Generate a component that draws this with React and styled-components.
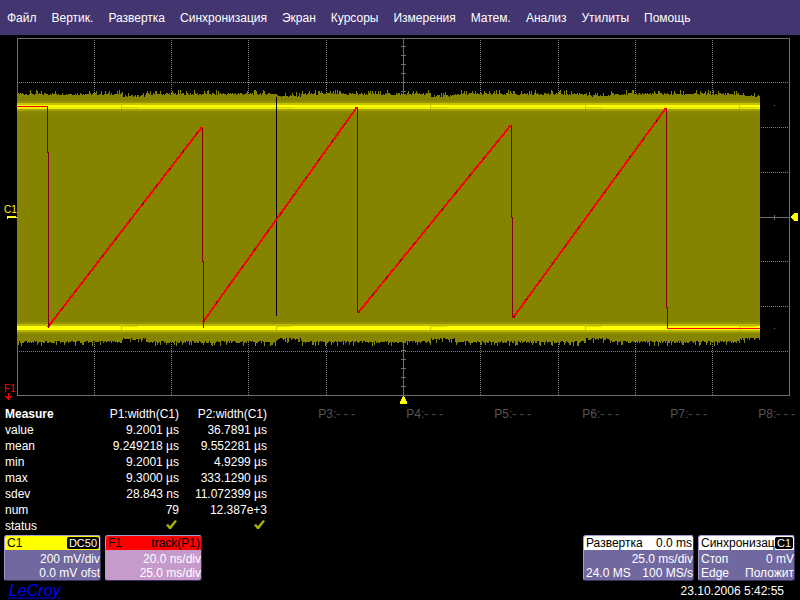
import React from "react";
import styled, { createGlobalStyle } from "styled-components";

const menuItems = [
  "Файл",
  "Вертик.",
  "Развертка",
  "Синхронизация",
  "Экран",
  "Курсоры",
  "Измерения",
  "Матем.",
  "Анализ",
  "Утилиты",
  "Помощь",
];

const params = [
  "P1:width(C1)",
  "P2:width(C1)",
  "P3:- - -",
  "P4:- - -",
  "P5:- - -",
  "P6:- - -",
  "P7:- - -",
  "P8:- - -",
];

const stats = [
  ["value", "9.2001 µs", "36.7891 µs"],
  ["mean", "9.249218 µs", "9.552281 µs"],
  ["min", "9.2001 µs", "4.9299 µs"],
  ["max", "9.3000 µs", "333.1290 µs"],
  ["sdev", "28.843 ns", "11.072399 µs"],
  ["num", "79", "12.387e+3"],
];

const gridColumns = [94, 171, 248, 326, 480, 558, 635, 712];
const gridRows = [82, 127, 172, 261, 306, 351];
const sweeps = [17, 122, 277, 431, 586, 740, 760];

const noise = (n) => {
  const v = Math.sin(n * 12.9898) * 43758.5453;
  return v - Math.floor(v);
};

const spike = (v) => {
  if (v > 0.95) return 5;
  if (v > 0.85) return 4;
  if (v > 0.6) return 2;
  return v > 0.25 ? 1 : 0;
};

// ragged outline of the signal, it gets thinner just after each sweep starts
function envelope() {
  let top = "";
  let bottom = "";
  for (let x = 17; x < 760; x++) {
    const start = sweeps.filter((s) => s <= x).pop();
    const near = start > 17 && x - start < 24;
    const up = (near ? 97 : 95) - spike(noise(x));
    const down = (near ? 338 : 341) + spike(noise(x + 900));
    top += `V${up}H${x + 1}`;
    bottom = `V${down}H${x}` + bottom;
  }
  return `M17 217${top}${bottom}Z`;
}

const signal = envelope();

const bands = [
  [101, 2, "#949200"],
  [103, 2, "#c6c400"],
  [105, 2, "#ffff00"],
  [107, 2, "#eeee00"],
  [109, 2, "#a4a200"],
  [111, 2, "#8b8900"],
  [322, 2, "#949200"],
  [324, 2, "#bcba00"],
  [326, 4, "#ffff00"],
  [330, 2, "#b8b600"],
  [332, 2, "#929000"],
];

const ramps = [
  "M48 327L202 127",
  "M203 322L357 107",
  "M358 313L511 125",
  "M513 318L666 108",
];

function Check() {
  return (
    <CheckIcon viewBox="0 0 11 10" role="img" aria-label="ok">
      <path d="M0 5L2 4L4 6L9 0L11 1L5 9H3Z" />
    </CheckIcon>
  );
}

function Waveform() {
  return (
    <Screen viewBox="0 35 800 370" role="img" aria-label="C1, F1">
      <g fill="none" stroke="#6f6f6f">
        <rect x="17.5" y="38.5" width="772" height="357" />
        <g stroke="#808080" strokeDasharray="1 1">
          {gridColumns.map((x) => (
            <path key={x} d={`M${x + 0.5} 40V395`} />
          ))}
          {gridRows.map((y) => (
            <path key={y} d={`M19 ${y + 0.5}H789`} />
          ))}
        </g>
        <path d="M403.5 38V396M17 217.5H790M774.5 215V220" />
        <path d="M774 105.5H775M774 328.5H775" />
        {Array.from({ length: 39 }, (_, i) => (
          <path key={i} d={`M401 ${Math.round(46 + i * 8.95) + 0.5}H406`} />
        ))}
      </g>

      <path d={signal} fill="#858400" />
      {bands.map(([y, height, color]) => (
        <rect key={y} x="17" y={y} width="743" height={height} fill={color} />
      ))}
      {sweeps.slice(1, 6).map((x) => (
        <g key={x} fill="#c6c400">
          <rect x={x - 1} y="103" width="1" height="6" />
          <rect x={x - 1} y="324" width="1" height="6" />
          <rect x={x} y="107" width="16" height="1" fill="#d6d400" />
          <rect x={x} y="326" width="16" height="1" fill="#dedc00" />
        </g>
      ))}

      <path d="M276.5 97V316" stroke="#000" />
      <g fill="none" stroke="#850000">
        <path d="M47.5 106V152.5H48.5V328M202.5 127V261.5H203.5V328" />
        <path d="M357.5 107V313" />
        <path d="M511.5 125V217.5H512.5V318M666.5 108V307.5H667.5V328" />
      </g>
      <g fill="none" stroke="#ff0000">
        <path d="M17 106.5H48M667 328.5H760" />
        {ramps.map((d) => (
          <path key={d} d={d} strokeWidth="2" />
        ))}
        {ramps.map((d) => (
          <path key={d} d={d} stroke="#850000" strokeDasharray="3 19" />
        ))}
      </g>

      <ChannelMark x="4" y="213" fill="#ffff00">
        C1
      </ChannelMark>
      <path d="M7 216H16V217H17V218H8V219H7Z" fill="#ffff00" />
      <ChannelMark x="4" y="392" fill="#ff0000">
        F1
      </ChannelMark>
      <path d="M8.5 393V399M5.5 396L8.5 399L11.5 396" stroke="#f00" fill="none" />
      <path d="M790 217L795 213H798V221H795Z" fill="#ffff00" />
      <path d="M403 396H404L407 402V404H400V402Z" fill="#ffff00" />
    </Screen>
  );
}

export default function App() {
  return (
    <Scope>
      <GlobalStyle />
      <MenuBar>
        {menuItems.map((item) => (
          <MenuButton key={item}>{item}</MenuButton>
        ))}
      </MenuBar>

      <Waveform />

      <MeasureTable>
        <thead>
          <tr>
            <th scope="col">Measure</th>
            {params.map((param, i) => (
              <ParamHead key={param} scope="col" $off={i > 1}>
                {param}
              </ParamHead>
            ))}
          </tr>
        </thead>
        <tbody>
          {stats.map(([name, p1, p2]) => (
            <tr key={name}>
              <RowHead scope="row">{name}</RowHead>
              <td>{p1}</td>
              <td>{p2}</td>
            </tr>
          ))}
          <tr>
            <RowHead scope="row">status</RowHead>
            <td>
              <Check />
            </td>
            <td>
              <Check />
            </td>
          </tr>
        </tbody>
      </MeasureTable>

      <Descriptors>
        <Card>
          <CardHead $color="#ffff00">
            <span>C1</span>
            <Badge>DC50</Badge>
          </CardHead>
          <CardLine $end>200 mV/div</CardLine>
          <CardLine $end>0.0 mV ofst</CardLine>
        </Card>
        <Card $color="#c69acb">
          <CardHead $color="#ff0000">
            <span>F1</span>
            <span>track(P1)</span>
          </CardHead>
          <CardLine $end>20.0 ns/div</CardLine>
          <CardLine $end>25.0 ms/div</CardLine>
        </Card>
        <Spacer />
        <Card $width="111px">
          <CardHead $color="#ffffff">
            <span>Развертка</span>
            <span>0.0 ms</span>
          </CardHead>
          <CardLine $end>25.0 ms/div</CardLine>
          <CardLine>
            <span>24.0 MS</span>
            <span>100 MS/s</span>
          </CardLine>
        </Card>
        <Card>
          <CardHead $color="#ffffff">
            <span>Синхронизац</span>
            <Badge>C1</Badge>
          </CardHead>
          <CardLine>
            <span>Стоп</span>
            <span>0 mV</span>
          </CardLine>
          <CardLine>
            <span>Edge</span>
            <span>Положит</span>
          </CardLine>
        </Card>
      </Descriptors>

      <Footer>
        <Logo viewBox="0 0 60 18" role="img" aria-label="LeCroy">
          <text x="2" y="14">
            LeCroy
          </text>
          <path d="M0 16H45M50 16H53" />
        </Logo>
        <time dateTime="2006-10-23T05:42:55">23.10.2006 5:42:55</time>
      </Footer>
    </Scope>
  );
}

const GlobalStyle = createGlobalStyle`
  * {
    box-sizing: border-box;
  }

  body {
    margin: 0;
    background: #000;
    color: #fff;
    font: 12px/16px "Liberation Sans", Arial, sans-serif;
  }

  button {
    border: 0;
    padding: 0;
    background: none;
    color: inherit;
    font: inherit;
    cursor: pointer;
  }
`;

const Scope = styled.main`
  display: flex;
  flex-direction: column;
`;

const MenuBar = styled.nav`
  display: flex;
  align-items: center;
  gap: 15px;
  height: 35px;
  padding: 0 7px;
  background: #423570;
`;

const MenuButton = styled.button`
  white-space: nowrap;
`;

const Screen = styled.svg`
  display: block;
  width: 100%;
  shape-rendering: crispEdges;
`;

const ChannelMark = styled.text`
  font-size: 10px;
`;

const MeasureTable = styled.table`
  width: calc(100% - 10px);
  margin: 1px 5px 0;
  table-layout: fixed;
  border-collapse: collapse;

  th,
  td {
    height: 16px;
    padding: 0;
    text-align: right;
    white-space: nowrap;
  }

  th:first-child {
    width: 86px;
    text-align: left;
  }
`;

const ParamHead = styled.th`
  color: ${(props) => (props.$off ? "#555" : "#fff")};
  font-weight: normal;
`;

const RowHead = styled.th`
  font-weight: normal;
`;

const CheckIcon = styled.svg`
  width: 11px;
  height: 10px;
  margin-right: 2px;
  fill: #a5b400;
`;

const Descriptors = styled.div`
  display: flex;
  gap: 4px;
  padding: 1px 5px 0 4px;
`;

const Spacer = styled.div`
  flex: 1;
`;

const Card = styled.button`
  width: ${(props) => props.$width || "97px"};
  height: 46px;
  border: 1px solid #a59ad0;
  border-right-color: #39315c;
  border-bottom-color: #39315c;
  border-radius: 3px;
  overflow: hidden;
  background: ${(props) => props.$color || "#7168a0"};
  line-height: 14px;
  text-align: left;
`;

const CardHead = styled.span`
  display: flex;
  justify-content: space-between;
  align-items: center;
  height: 14px;
  margin-bottom: 2px;
  padding: 0 1px 0 2px;
  background: ${(props) => props.$color};
  color: #000;
  white-space: nowrap;
`;

const CardLine = styled.span`
  display: flex;
  justify-content: ${(props) => (props.$end ? "flex-end" : "space-between")};
  padding-left: 2px;
  white-space: nowrap;
`;

const Badge = styled.span`
  padding: 0 2px;
  border-radius: 2px;
  background: #000;
  color: #fff;
  font-size: 11px;
  line-height: 12px;
`;

const Footer = styled.footer`
  display: flex;
  justify-content: space-between;
  align-items: center;
  padding: 1px 16px 0 7px;
`;

const Logo = styled.svg`
  width: 60px;
  height: 18px;
  overflow: visible;
  fill: #0000ff;

  text {
    font-size: 16px;
    font-style: italic;
  }

  path {
    stroke: #0000ff;
    stroke-width: 1px;
  }
`;
